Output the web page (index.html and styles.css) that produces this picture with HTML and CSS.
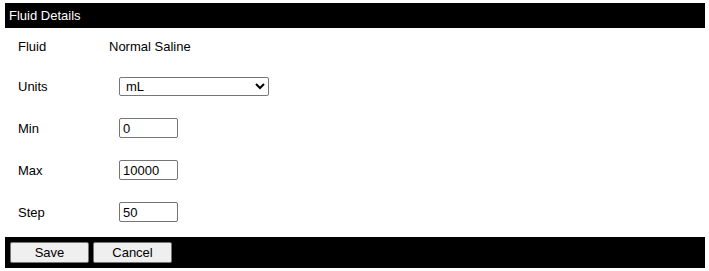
FILE: index.html
```html
<!DOCTYPE html>
<html>
<head>
<meta charset="utf-8">
<link rel="stylesheet" href="styles.css">
</head>
<body>
<div class="panel">
  <div class="header">Fluid Details</div>
  <div class="rows">
    <div class="row first">
      <div class="label">Fluid</div>
      <div class="value">Normal Saline</div>
    </div>
    <div class="row">
      <div class="label">Units</div>
      <div class="value"><select class="field select"><option>mL</option></select></div>
    </div>
    <div class="row">
      <div class="label">Min</div>
      <div class="value"><input class="field text" type="text" value="0"></div>
    </div>
    <div class="row">
      <div class="label">Max</div>
      <div class="value"><input class="field text" type="text" value="10000"></div>
    </div>
    <div class="row">
      <div class="label">Step</div>
      <div class="value"><input class="field text" type="text" value="50"></div>
    </div>
  </div>
  <div class="footer">
    <button class="btn">Save</button>
    <button class="btn">Cancel</button>
  </div>
</div>
</body>
</html>
```

FILE: styles.css
```css
html, body {
  margin: 0;
  padding: 0;
  background: #fff;
}
body {
  font-family: "Liberation Sans", Arial, sans-serif;
  font-size: 13px;
  color: #000;
}
.panel {
  margin: 3px 4px 0 5px;
  width: 700px;
}
.header {
  background: #000;
  color: #fff;
  height: 25px;
  line-height: 25px;
  padding-left: 4px;
  font-size: 13px;
}
.rows {
  display: flex;
  flex-direction: column;
}
.row {
  display: flex;
  align-items: center;
  height: 42px;
}
.row.first {
  height: 37px;
}
.label {
  width: 91px;
  padding-left: 13px;
}
.value {
  flex: 1;
}
.field {
  margin-left: 10px;
  font-family: "Liberation Sans", Arial, sans-serif;
  font-size: 13px;
  color: #000;
  border: 1px solid #767676;
  border-radius: 2px;
  box-sizing: border-box;
  background: #fff;
}
.text {
  width: 59px;
  height: 20px;
  padding: 1px 3px;
}
.select {
  width: 150px;
  height: 19px;
  padding: 0 2px;
}
.footer {
  margin-top: 4px;
  background: #000;
  height: 31px;
  display: flex;
  align-items: center;
  gap: 4px;
  padding-left: 5px;
}
.btn {
  width: 79px;
  height: 21px;
  background: #efefef;
  border: 1px solid #767676;
  border-radius: 2px;
  font-family: "Liberation Sans", Arial, sans-serif;
  font-size: 13px;
  color: #000;
  padding: 0;
}
```
